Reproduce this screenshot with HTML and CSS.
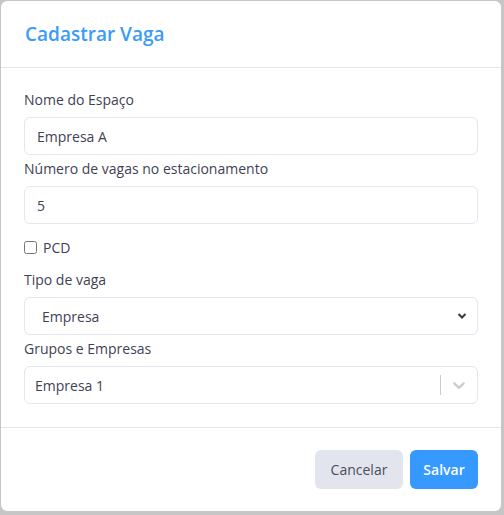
FILE: index.html
```html
<!DOCTYPE html>
<html>
<head>
    <title>Cadastrar Vaga</title>
    <link rel="stylesheet" href="styles.css">
</head>
<body>
    <div class="modal">
        <div class="modal-header">
            <h2>Cadastrar Vaga</h2>
        </div>
        <div class="modal-body">
            <div class="form-group">
                <label for="nome">Nome do Espaço</label>
                <input type="text" id="nome" value="Empresa A">
            </div>
            <div class="form-group">
                <label for="vagas">Número de vagas no estacionamento</label>
                <input type="text" id="vagas" value="5">
            </div>
            <div class="check-row">
                <input type="checkbox" id="pcd">
                <label for="pcd">PCD</label>
            </div>
            <div class="form-group">
                <label for="tipo">Tipo de vaga</label>
                <div class="select-wrap">
                    <select id="tipo">
                        <option>Empresa</option>
                    </select>
                    <svg class="select-arrow" width="10" height="8" viewBox="0 0 10 8">
                        <polyline points="1.5,2 5,5.5 8.5,2" fill="none" stroke="#343a40" stroke-width="2"/>
                    </svg>
                </div>
            </div>
            <div class="form-group">
                <label>Grupos e Empresas</label>
                <div class="react-select">
                    <div class="rs-value">Empresa 1</div>
                    <span class="rs-separator"></span>
                    <div class="rs-indicator">
                        <svg width="20" height="20" viewBox="0 0 20 20"><path fill="#cccccc" d="M4.516 7.548c0.436-0.446 1.043-0.481 1.576 0l3.908 3.747 3.908-3.747c0.533-0.481 1.141-0.446 1.574 0 0.436 0.445 0.408 1.197 0 1.615-0.406 0.418-4.695 4.502-4.695 4.502-0.217 0.223-0.502 0.335-0.787 0.335s-0.57-0.112-0.789-0.335c0 0-4.287-4.084-4.695-4.502s-0.436-1.17 0-1.615z"/></svg>
                    </div>
                </div>
            </div>
        </div>
        <div class="modal-footer">
            <button class="btn btn-cancel">Cancelar</button>
            <button class="btn btn-save">Salvar</button>
        </div>
    </div>
</body>
</html>
```

FILE: styles.css
```css
body {
    margin: 0;
    background-color: #c6c6c6;
    font-family: "Open Sans", Arial, sans-serif;
    color: #3f4254;
}
.modal {
    width: 500px;
    margin: 1px 0 0 1px;
    background-color: #fff;
    border-radius: 6px;
}
.modal-header {
    padding: 20px 24px;
    border-bottom: 1px solid #e4e6ef;
}
.modal-header h2 {
    margin: 0;
    font-size: 19px;
    line-height: 26px;
    font-weight: 600;
    color: #3a9bf9;
}
.modal-body {
    padding: 21px 23px 20px 23px;
}
.form-group {
    margin-bottom: 3px;
}
.form-group label {
    display: block;
    font-size: 14px;
    line-height: 21px;
    margin-bottom: 7px;
    color: #3f4254;
}
input[type="text"] {
    box-sizing: border-box;
    width: 100%;
    height: 38px;
    padding: 0 12px;
    border: 1px solid #e4e6ef;
    border-radius: 6px;
    font-family: inherit;
    font-size: 14px;
    color: #3f4254;
    outline: none;
}
.check-row {
    display: flex;
    align-items: center;
    gap: 6px;
    margin: 13px 0 11px 0;
    height: 21px;
}
.check-row input {
    margin: 0;
    width: 13px;
    height: 13px;
}
.check-row label {
    font-size: 14px;
    color: #3f4254;
}
.select-wrap {
    position: relative;
}
.select-wrap select {
    box-sizing: border-box;
    width: 100%;
    height: 38px;
    padding: 0 17px;
    border: 1px solid #e4e6ef;
    border-radius: 6px;
    background-color: #fff;
    font-family: inherit;
    font-size: 14px;
    color: #3f4254;
    appearance: none;
    -webkit-appearance: none;
    outline: none;
}
.select-arrow {
    position: absolute;
    right: 11px;
    top: 15px;
    pointer-events: none;
}
.react-select {
    display: flex;
    align-items: center;
    box-sizing: border-box;
    height: 38px;
    border: 1px solid #e4e6ef;
    border-radius: 6px;
}
.rs-value {
    flex: 1;
    padding-left: 10px;
    font-size: 14px;
    color: #3f4254;
}
.rs-separator {
    width: 1px;
    height: 20px;
    background-color: #cccccc;
}
.rs-indicator {
    display: flex;
    padding: 0 8px;
}
.modal-footer {
    display: flex;
    justify-content: flex-end;
    gap: 7px;
    padding: 22px 23px 22px 23px;
    border-top: 1px solid #e4e6ef;
}
.btn {
    height: 39px;
    border: none;
    border-radius: 6px;
    font-family: inherit;
    font-size: 14px;
    cursor: pointer;
}
.btn-cancel {
    width: 88px;
    background-color: #e3e5ee;
    color: #4b4d5a;
}
.btn-save {
    width: 68px;
    background-color: #3699ff;
    color: #fff;
    font-weight: 600;
}
```
